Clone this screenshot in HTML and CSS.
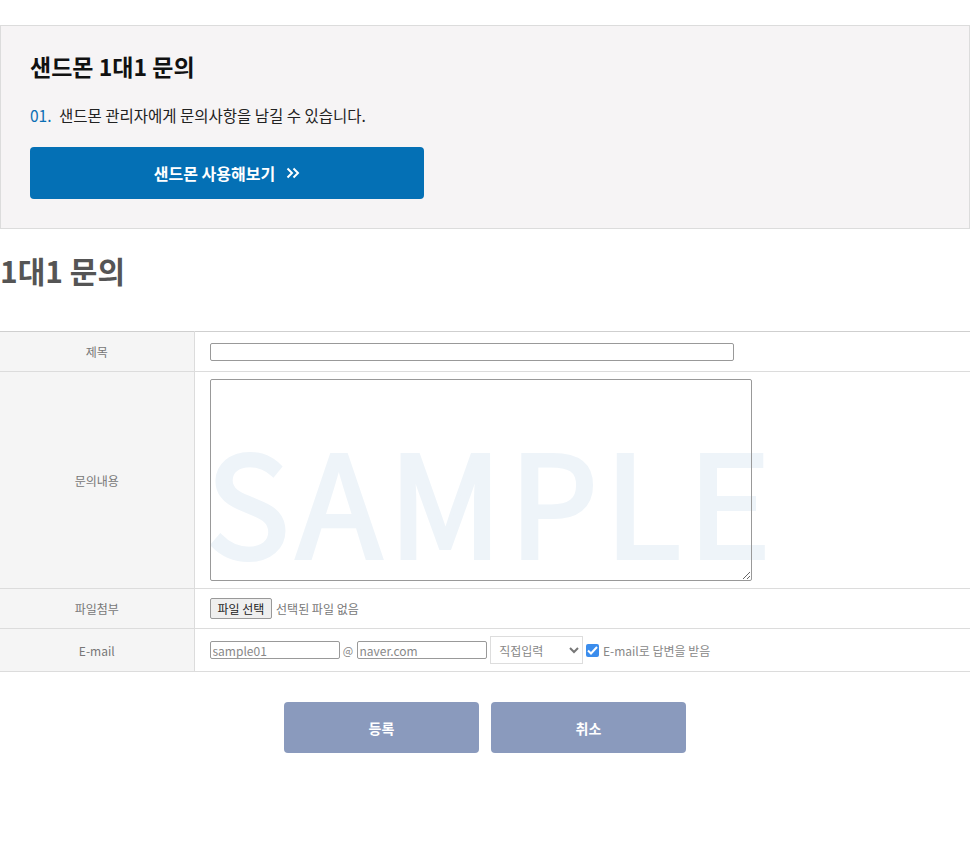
FILE: index.html
```html
<!DOCTYPE html>
<html>
<head>
	<meta charset="utf-8">
	<title>샌드몬 1대1 문의</title>
	<link rel="stylesheet" href="styles.css">
</head>
<body>
	<section class="intro">
		<h2>샌드몬 1대1 문의</h2>
		<p><span class="num">01.</span> 샌드몬 관리자에게 문의사항을 남길 수 있습니다.</p>
		<a class="try-btn" href="#">샌드몬 사용해보기
			<svg width="14" height="12" viewBox="0 0 14 12"><path d="M1.5 1.5 L6 6 L1.5 10.5 M7.5 1.5 L12 6 L7.5 10.5" fill="none" stroke="#fff" stroke-width="2"/></svg>
		</a>
	</section>

	<h1 class="page-title">1대1 문의</h1>

	<div class="form-wrap">
		<div class="watermark">SAMPLE</div>
		<table class="qna">
			<tr>
				<th>제목</th>
				<td><input type="text" class="subject"></td>
			</tr>
			<tr class="content-row">
				<th>문의내용</th>
				<td><textarea class="content"></textarea></td>
			</tr>
			<tr>
				<th>파일첨부</th>
				<td><span class="file-btn">파일 선택</span> <span class="file-none">선택된 파일 없음</span></td>
			</tr>
			<tr>
				<th>E-mail</th>
				<td class="email">
					<input type="text" class="mail" placeholder="sample01"><span class="at">@</span><input type="text" class="mail" placeholder="naver.com">
					<span class="select">직접입력
						<svg width="10" height="7" viewBox="0 0 10 7"><path d="M1 1 L5 5 L9 1" fill="none" stroke="#777" stroke-width="2"/></svg>
					</span>
					<label class="agree"><span class="check"><svg width="11" height="9" viewBox="0 0 11 9"><path d="M1 4.5 L4 7.5 L10 1" fill="none" stroke="#fff" stroke-width="2"/></svg></span>E-mail로 답변을 받음</label>
				</td>
			</tr>
		</table>
	</div>

	<div class="actions">
		<button>등록</button>
		<button>취소</button>
	</div>
</body>
</html>
```

FILE: styles.css
```css
* {
	box-sizing: border-box;
	font-family: "Noto Sans CJK KR", "Noto Sans", sans-serif;
}
html, body {
	margin: 0;
	background-color: white;
}
.intro {
	margin-top: 25px;
	border: 1px solid #dcdcdc;
	background-color: #f6f4f5;
	padding: 24px 29px 29px;
}
.intro h2 {
	margin: 0;
	font-size: 23px;
	line-height: 32px;
	font-weight: 700;
	color: #111;
}
.intro p {
	margin: 22px 0 0;
	font-size: 15.5px;
	line-height: 22px;
	color: #222;
}
.num {
	color: #0a6fb4;
	margin-right: 4px;
}
.try-btn {
	display: flex;
	align-items: center;
	justify-content: center;
	gap: 11px;
	margin-top: 21px;
	width: 394px;
	height: 52px;
	border-radius: 4px;
	background-color: #0470b5;
	color: white;
	font-size: 16px;
	font-weight: 700;
	text-decoration: none;
}
.page-title {
	margin: 19px 0 0;
	font-size: 30px;
	line-height: 44px;
	font-weight: 700;
	color: #555;
}
.form-wrap {
	position: relative;
	margin-top: 39px;
}
.qna {
	position: relative;
	width: 100%;
	border-collapse: collapse;
	border-top: 1px solid #cfcfcf;
}
.qna th, .qna td {
	border-bottom: 1px solid #dcdcdc;
	font-size: 12px;
	color: #777;
}
.qna th {
	width: 194px;
	height: 40px;
	background-color: #f5f5f5;
	border-right: 1px solid #dcdcdc;
	font-weight: 400;
	padding: 0;
}
.qna td {
	padding: 0 15px;
}
.qna tr:last-child th, .qna tr:last-child td {
	height: 43px;
}
.subject {
	display: block;
	width: 524px;
	height: 18px;
	border: 1px solid #999;
	border-radius: 2px;
	background: transparent;
}
.content-row td {
	height: 217px;
	padding-top: 6px;
	padding-bottom: 6px;
}
.content {
	display: block;
	width: 542px;
	height: 202px;
	border: 1px solid #999;
	border-radius: 2px;
	background: transparent;
	resize: both;
}
.file-btn {
	display: inline-block;
	padding: 0 7px;
	height: 21px;
	line-height: 19px;
	border: 1px solid #999;
	border-radius: 2px;
	background-color: #efefef;
	color: #222;
	font-size: 12px;
}
.file-none {
	color: #777;
	margin-left: 1px;
}
.email {
	white-space: nowrap;
}
.email > * {
	vertical-align: middle;
}
.mail {
	width: 130px;
	height: 18px;
	border: 1px solid #999;
	border-radius: 2px;
	font-size: 12px;
	padding: 0 2px;
	background: transparent;
}
.mail::placeholder {
	color: #888;
}
.at {
	display: inline-block;
	width: 17px;
	text-align: center;
	color: #888;
	font-size: 11px;
}
.select {
	display: inline-flex;
	align-items: center;
	justify-content: space-between;
	width: 93px;
	height: 28px;
	margin-left: 1px;
	padding: 0 3px 0 8px;
	border: 1px solid #ddd;
	background-color: white;
	color: #888;
	font-size: 12px;
}
.agree {
	display: inline-flex;
	align-items: center;
	gap: 4px;
	color: #888;
	font-size: 12px;
}
.check {
	display: inline-flex;
	align-items: center;
	justify-content: center;
	width: 13px;
	height: 13px;
	border-radius: 2px;
	background-color: #3b8ded;
}
.watermark {
	position: absolute;
	left: 206px;
	top: 96px;
	font-family: "Noto Sans CJK KR", sans-serif;
	font-size: 140px;
	font-weight: 400;
	line-height: 1;
	letter-spacing: 7px;
	color: #eef4f9;
	-webkit-text-stroke: 4px #eef4f9;
	pointer-events: none;
}
.actions {
	display: flex;
	justify-content: center;
	gap: 12px;
	margin-top: 30px;
}
.actions button {
	width: 195px;
	height: 51px;
	border: none;
	border-radius: 4px;
	background-color: #8a9abd;
	color: white;
	font-size: 14px;
	font-weight: 700;
}
```
